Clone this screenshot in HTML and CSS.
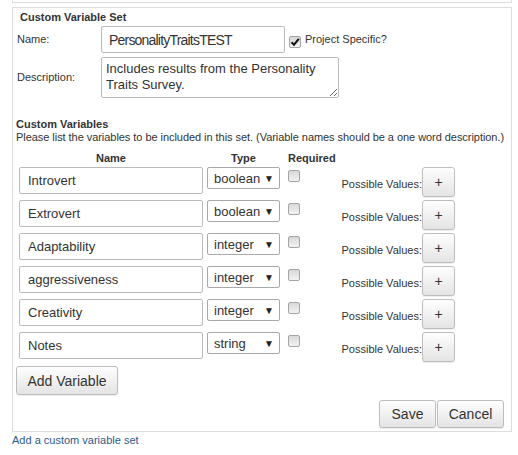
FILE: index.html
```html
<!DOCTYPE html>
<html>
<head>
<meta charset="utf-8">
<link rel="stylesheet" href="styles.css">
</head>
<body>
<div class="prev-box"></div>
<div class="panel">
  <div class="panel-title">Custom Variable Set</div>
  <div class="form-row">
    <label class="form-label">Name:</label>
    <input class="text-input name-input" type="text" value="PersonalityTraitsTEST">
    <div class="project-check">
      <span class="checkbox is-checked"><svg viewBox="0 0 12 12" width="12" height="12"><path d="M2.5 6.2 L5 8.7 L9.8 2.8" fill="none" stroke="#111" stroke-width="2"/></svg></span>
      <span class="check-label">Project Specific?</span>
    </div>
  </div>
  <div class="form-row desc-row">
    <label class="form-label">Description:</label>
    <textarea class="desc-input">Includes results from the Personality Traits Survey.</textarea>
  </div>
  <div class="section-title">Custom Variables</div>
  <div class="section-hint">Please list the variables to be included in this set. (Variable names should be a one word description.)</div>
  <div class="var-table">
    <div class="var-head">
      <span class="col-name">Name</span>
      <span class="col-type">Type</span>
      <span class="col-req">Required</span>
    </div>
    <div class="var-row">
      <input class="text-input var-name" type="text" value="Introvert">
      <div class="select"><span>boolean</span><span class="arrow">▼</span></div>
      <span class="checkbox"></span>
      <span class="pv-label">Possible Values:</span>
      <button class="btn plus-btn">+</button>
    </div>
    <div class="var-row">
      <input class="text-input var-name" type="text" value="Extrovert">
      <div class="select"><span>boolean</span><span class="arrow">▼</span></div>
      <span class="checkbox"></span>
      <span class="pv-label">Possible Values:</span>
      <button class="btn plus-btn">+</button>
    </div>
    <div class="var-row">
      <input class="text-input var-name" type="text" value="Adaptability">
      <div class="select"><span>integer</span><span class="arrow">▼</span></div>
      <span class="checkbox"></span>
      <span class="pv-label">Possible Values:</span>
      <button class="btn plus-btn">+</button>
    </div>
    <div class="var-row">
      <input class="text-input var-name" type="text" value="aggressiveness">
      <div class="select"><span>integer</span><span class="arrow">▼</span></div>
      <span class="checkbox"></span>
      <span class="pv-label">Possible Values:</span>
      <button class="btn plus-btn">+</button>
    </div>
    <div class="var-row">
      <input class="text-input var-name" type="text" value="Creativity">
      <div class="select"><span>integer</span><span class="arrow">▼</span></div>
      <span class="checkbox"></span>
      <span class="pv-label">Possible Values:</span>
      <button class="btn plus-btn">+</button>
    </div>
    <div class="var-row">
      <input class="text-input var-name" type="text" value="Notes">
      <div class="select"><span>string</span><span class="arrow">▼</span></div>
      <span class="checkbox"></span>
      <span class="pv-label">Possible Values:</span>
      <button class="btn plus-btn">+</button>
    </div>
  </div>
  <button class="btn add-btn">Add Variable</button>
  <div class="actions">
    <button class="btn save-btn">Save</button>
    <button class="btn cancel-btn">Cancel</button>
  </div>
</div>
<a class="add-link" href="#">Add a custom variable set</a>
</body>
</html>
```
FILE: styles.css
```css
* { box-sizing: border-box; }
html, body { margin: 0; padding: 0; background: #fff; }
body {
  font-family: "Liberation Sans", Arial, sans-serif;
  font-size: 11px;
  line-height: 13px;
  color: #333;
}
.prev-box {
  margin: 0 12px;
  width: 500px;
  height: 3px;
  border: 1px solid #ddd;
  border-top: none;
}
.panel {
  margin: 4px 0 0 12px;
  width: 500px;
  border: 1px solid #ddd;
  padding: 2px 7px 3px 3px;
}
.panel-title {
  font-weight: bold;
  line-height: 14px;
  padding-left: 4px;
  margin-bottom: 2px;
}
.form-row {
  display: flex;
  align-items: center;
}
.form-row:first-of-type { align-items: flex-start; }
.form-label {
  width: 85px;
  padding-left: 1px;
  align-self: center;
}
.text-input {
  font-family: "Liberation Sans", Arial, sans-serif;
  font-size: 13px;
  color: #333;
  border: 1px solid #bbb;
  border-radius: 2px;
  background: #fff;
  outline: none;
  margin: 0;
}
.name-input {
  width: 184px;
  height: 27px;
  padding: 0 7px;
  font-size: 14px;
  letter-spacing: -0.8px;
}
.project-check {
  display: flex;
  align-items: flex-start;
  margin-left: 4px;
}
.checkbox {
  display: block;
  width: 12px;
  height: 12px;
  border: 1px solid #a5a5a5;
  border-radius: 2px;
  background: linear-gradient(#d8d8d8, #f2f2f2);
  flex: none;
}
.project-check .checkbox { margin-top: 5px; }
.checkbox svg { display: block; margin: -1px 0 0 -1px; }
.check-label { margin-left: 4px; margin-top: 2px; }
.desc-row { margin-top: 4px; }
.desc-input {
  width: 238px;
  height: 41px;
  font-family: "Liberation Sans", Arial, sans-serif;
  font-size: 13px;
  line-height: 16px;
  color: #333;
  border: 1px solid #bbb;
  border-radius: 2px;
  padding: 3px 4px;
  margin: 0;
  overflow: hidden;
  outline: none;
}
.section-title {
  font-weight: bold;
  margin-top: 20px;
}
.section-hint {
  white-space: nowrap;
  letter-spacing: -0.05px;
}
.var-table { margin-left: 3px; margin-top: 8px; }
.var-head {
  display: flex;
  font-weight: bold;
  margin-bottom: 2px;
}
.col-name { width: 184px; text-align: center; }
.col-type { width: 73px; margin-left: 4px; text-align: center; }
.col-req { margin-left: 8px; }
.var-row {
  display: flex;
  align-items: flex-start;
  width: 436px;
  margin-bottom: 3px;
}
.var-name {
  width: 184px;
  height: 27px;
  padding: 0 8px;
}
.select {
  display: flex;
  align-items: center;
  justify-content: space-between;
  width: 73px;
  height: 22px;
  margin-left: 4px;
  border: 1px solid #a9a9a9;
  border-radius: 2px;
  padding: 0 5px 0 6px;
  font-size: 13px;
  color: #333;
  background: #fff;
}
.select .arrow { font-size: 10px; color: #222; }
.var-row .checkbox { margin-left: 8px; margin-top: 3px; }
.pv-label { margin-left: auto; margin-top: 11px; }
.btn {
  font-family: "Liberation Sans", Arial, sans-serif;
  color: #333;
  background: linear-gradient(#fefefe, #e4e4e4);
  border: 1px solid #bdbdbd;
  border-radius: 3px;
  box-shadow: 0 1px 1px rgba(0,0,0,0.08);
  padding: 0;
  margin: 0;
  cursor: pointer;
}
.plus-btn {
  width: 33px;
  height: 30px;
  font-size: 14px;
}
.add-btn {
  display: block;
  width: 102px;
  height: 29px;
  font-size: 14px;
  margin-top: 4px;
}
.actions {
  display: flex;
  justify-content: flex-end;
  gap: 1px;
  margin-top: 5px;
}
.save-btn, .cancel-btn { height: 28px; font-size: 14px; }
.save-btn { width: 57px; }
.cancel-btn { width: 67px; }
.add-link {
  display: block;
  margin: 2px 0 0 12px;
  color: #2d5a88;
  text-decoration: none;
}
```
